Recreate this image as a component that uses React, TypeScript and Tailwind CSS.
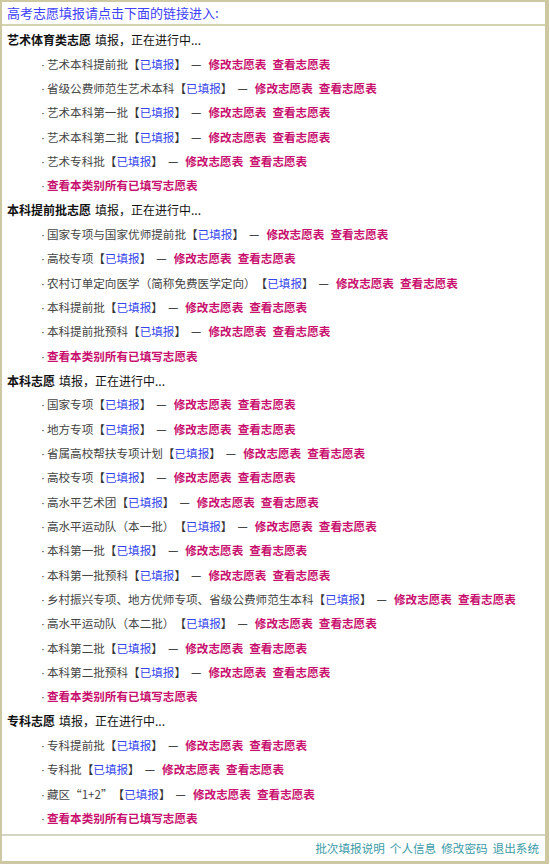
import React from 'react';

type Item = { name: string; filled: boolean };
type Section = { title: string; items: Item[] };

const sections: Section[] = [
  {
    title: '艺术体育类志愿',
    items: [
      { name: '艺术本科提前批', filled: true },
      { name: '省级公费师范生艺术本科', filled: true },
      { name: '艺术本科第一批', filled: true },
      { name: '艺术本科第二批', filled: true },
      { name: '艺术专科批', filled: true },
    ],
  },
  {
    title: '本科提前批志愿',
    items: [
      { name: '国家专项与国家优师提前批', filled: true },
      { name: '高校专项', filled: true },
      { name: '农村订单定向医学（简称免费医学定向）', filled: true },
      { name: '本科提前批', filled: true },
      { name: '本科提前批预科', filled: true },
    ],
  },
  {
    title: '本科志愿',
    items: [
      { name: '国家专项', filled: true },
      { name: '地方专项', filled: true },
      { name: '省属高校帮扶专项计划', filled: true },
      { name: '高校专项', filled: true },
      { name: '高水平艺术团', filled: true },
      { name: '高水平运动队（本一批）', filled: true },
      { name: '本科第一批', filled: true },
      { name: '本科第一批预科', filled: true },
      { name: '乡村振兴专项、地方优师专项、省级公费师范生本科', filled: true },
      { name: '高水平运动队（本二批）', filled: true },
      { name: '本科第二批', filled: true },
      { name: '本科第二批预科', filled: true },
    ],
  },
  {
    title: '专科志愿',
    items: [
      { name: '专科提前批', filled: true },
      { name: '专科批', filled: true },
      { name: '藏区“1+2”', filled: true },
    ],
  },
];

const font = { fontFamily: '"Microsoft YaHei", "Noto Sans CJK SC", "Noto Sans", sans-serif' };

function Dot() {
  return <span className="mr-[2px] text-[#333] font-['Liberation_Sans',sans-serif]">·</span>;
}

function Row({ item }: { item: Item }) {
  return (
    <div className="h-[24.33px] flex items-center pl-[39px] text-[11.6px] text-[#444] whitespace-nowrap">
      <Dot />
      <span>{item.name}</span>
      <span className="text-[#333]">【</span>
      <a className="text-[#3344ee]">已填报</a>
      <span className="text-[#333]">】</span>
      <span className="ml-[5px] mr-[7px] text-[#111]">—</span>
      <a className="font-bold text-[#c8106e]">修改志愿表</a>
      <a className="ml-[6px] font-bold text-[#c8106e]">查看志愿表</a>
    </div>
  );
}

export default function App() {
  return (
    <div className="w-[550px] h-[865px] bg-white" style={font}>
      <div className="w-[549px] h-[864px] flex flex-col border-l-2 border-t-2 border-b-[3px] border-r-[4px] border-[#cdc7a2]">
        {/* Header */}
        <div className="h-[24px] flex items-center pl-[5px] border-b-2 border-[#d2d4b0] text-[13px] text-[#4040ff]">
          高考志愿填报请点击下面的链接进入:
        </div>

        {/* Sections */}
        <div className="flex-1 pt-[2px]">
          {sections.map((section) => (
            <div key={section.title}>
              <div className="h-[24.33px] flex items-center pl-[5px] text-[12px] text-[#111]">
                <span className="font-bold">{section.title}</span>
                <span className="ml-[4px]">填报，正在进行中...</span>
              </div>
              {section.items.map((item) => (
                <Row key={item.name} item={item} />
              ))}
              <div className="h-[24.33px] flex items-center pl-[39px] text-[11.6px] whitespace-nowrap">
                <Dot />
                <a className="font-bold text-[#c8106e]">查看本类别所有已填写志愿表</a>
              </div>
            </div>
          ))}
        </div>

        {/* Footer */}
        <div className="h-[27px] flex items-center justify-end gap-[5px] pr-[6px] border-t-2 border-[#d4d6c4] text-[11.6px] text-[#3a9aa6]">
          <a>批次填报说明</a>
          <a>个人信息</a>
          <a>修改密码</a>
          <a>退出系统</a>
        </div>
      </div>
    </div>
  );
}
